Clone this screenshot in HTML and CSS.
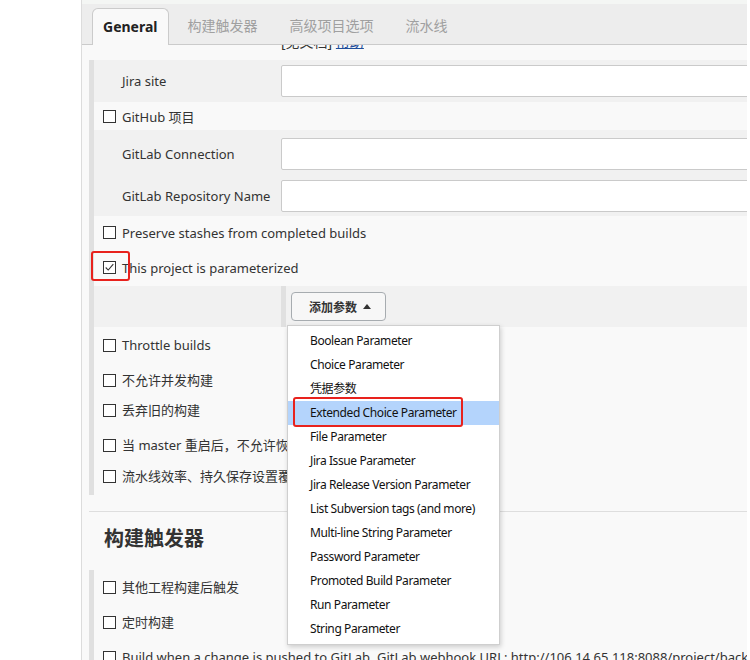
FILE: index.html
```html
<!DOCTYPE html>
<html lang="zh">
<head>
<meta charset="utf-8">
<title>Jenkins - General</title>
<link rel="stylesheet" href="styles.css">
</head>
<body>
<div class="page">
  <aside class="side"></aside>
  <main class="main">
    <nav class="tabs">
      <span class="tab active">General</span>
      <span class="tab">构建触发器</span>
      <span class="tab">高级项目选项</span>
      <span class="tab">流水线</span>
    </nav>
    <div class="clipped"><span class="clipped-text">[见文档] <a class="link">帮助</a></span></div>

    <section class="block">
      <div class="field shaded first">
        <span class="label">Jira site</span><span class="input"></span>
      </div>
      <div class="row r-github"><span class="cb"></span><span>GitHub 项目</span></div>
      <div class="nested shaded">
        <div class="field"><span class="label">GitLab Connection</span><span class="input"></span></div>
        <div class="field"><span class="label">GitLab Repository Name</span><span class="input"></span></div>
      </div>
      <div class="row r-33"><span class="cb"></span><span>Preserve stashes from completed builds</span></div>
      <div class="row r-param">
        <span class="cb checked"><svg viewBox="0 0 13 13" width="11" height="11"><polyline points="2,6.5 5,9.5 11,2.5" fill="none" stroke="#333" stroke-width="1.3"/></svg></span>
        <span>This project is parameterized</span>
        <span class="mark mark-cb"></span>
      </div>
      <div class="param shaded">
        <div class="param-inner">
          <button class="btn">添加参数 <svg class="caret" viewBox="0 0 8 5" width="8" height="5"><polygon points="0,5 4,0 8,5" fill="#333"/></svg></button>
          <ul class="menu">
            <li>Boolean Parameter</li>
            <li>Choice Parameter</li>
            <li>凭据参数</li>
            <li class="hl">Extended Choice Parameter<span class="mark mark-item"></span></li>
            <li>File Parameter</li>
            <li>Jira Issue Parameter</li>
            <li>Jira Release Version Parameter</li>
            <li>List Subversion tags (and more)</li>
            <li>Multi-line String Parameter</li>
            <li>Password Parameter</li>
            <li>Promoted Build Parameter</li>
            <li>Run Parameter</li>
            <li>String Parameter</li>
          </ul>
        </div>
      </div>
      <div class="row trow h35"><span class="cb"></span><span>Throttle builds</span></div>
      <div class="row trow h30"><span class="cb"></span><span>不允许并发构建</span></div>
      <div class="row trow h35"><span class="cb"></span><span>丢弃旧的构建</span></div>
      <div class="row trow h31"><span class="cb"></span><span>当 master 重启后，不允许恢复流水线</span></div>
      <div class="row trow h37"><span class="cb"></span><span>流水线效率、持久保存设置覆盖</span></div>
    </section>

    <hr class="sep">
    <h2 class="heading">构建触发器</h2>

    <section class="block triggers">
      <div class="row trow2 h35"><span class="cb"></span><span>其他工程构建后触发</span></div>
      <div class="row trow2 h35"><span class="cb"></span><span>定时构建</span></div>
      <div class="row trow2 h35"><span class="cb"></span><span class="nowrap">Build when a change is pushed to GitLab. GitLab webhook URL: http://106.14.65.118:8088/project/backend</span></div>
    </section>
  </main>
</div>
</body>
</html>
```

FILE: styles.css
```css
* { box-sizing: border-box; }
html, body { margin: 0; padding: 0; background: #fff; }
body {
  font-family: "Noto Sans", "Noto Sans CJK SC", sans-serif;
  font-size: 13px;
  color: #333;
}
.page { display: flex; height: 660px; overflow: hidden; }
.side { width: 82px; flex: none; border-right: 1px solid #dcdcdc; background: #fff; }
.main {
  width: 665px; flex: none;
  background: #f9f9f9;
  border-top: 4px solid #f4f6f4;
  overflow: hidden;
}
.tabs {
  display: flex; align-items: flex-end;
  height: 41px;
  background: #ededed;
  border-bottom: 1px solid #cbcbcb;
  padding-left: 10px;
}
.tab {
  height: 36px; line-height: 36px;
  padding: 0 11px; margin-right: 10px;
  font-size: 14px; color: #a0a0a0;
  white-space: nowrap;
}
.tab.active {
  background: #f9f9f9;
  border: 1px solid #cbcbcb; border-bottom: none;
  border-radius: 6px 6px 0 0;
  color: #222; font-weight: bold;
  height: 37px; margin-bottom: -1px;
  padding: 0 10px; margin-right: 8px;
}
.clipped { height: 15px; overflow: hidden; padding-left: 199px; }
.clipped-text { display: block; margin-top: -12px; line-height: 18px; font-size: 14px; color: #333; }
.link { color: #1f4e9a; text-decoration: underline; }

.block {
  margin-left: 7px;
  border-left: 5px solid #e0e0e0;
}
.shaded { background: #f1f1f1; }
.field {
  display: flex; align-items: center;
  padding-left: 28px;
}
.field.first { height: 42px; }
.label { width: 159px; flex: none; white-space: nowrap; }
.input {
  display: block; width: 480px; height: 32px; flex: none;
  background: #fff; border: 1px solid #cacaca; border-radius: 2px;
}
.nested { display: flex; flex-direction: column; gap: 10px; padding: 8px 0 4px; }

.row {
  position: relative;
  display: flex; align-items: center; gap: 6px;
  padding-left: 9px;
  white-space: nowrap;
}
.r-github { height: 28px; }
.r-33 { height: 33px; }
.r-param { height: 37px; }
.trow { align-items: flex-start; padding-top: 9px; }
.trow2 { align-items: flex-start; padding-top: 8px; }
.trow span:last-child, .trow2 span:last-child { line-height: 18px; }
.trow .cb, .trow2 .cb { margin-top: 3px; }
.h30 { height: 30px; }
.h31 { height: 31px; }
.h35 { height: 35px; }
.h37 { height: 37px; }
.cb {
  width: 13px; height: 13px; flex: none;
  border: 1px solid #333; background: #fff;
  display: flex; align-items: center; justify-content: center;
}
.mark {
  position: absolute;
  border: 2.5px solid #e8221d;
  border-radius: 3px;
}
.mark-cb { left: -3px; top: 2px; width: 39px; height: 30px; }

.param { height: 41px; padding-left: 187px; }
.param-inner {
  position: relative;
  height: 41px;
  border-left: 5px solid #e0e0e0;
  padding: 6px 0 0 5px;
}
.btn {
  display: flex; align-items: center; gap: 6px;
  width: 95px; height: 29px;
  padding: 0 0 0 17px;
  background: #f7f7f7;
  border: 1px solid #a7acb0; border-radius: 4px;
  font-family: "Noto Sans", "Noto Sans CJK SC", sans-serif;
  font-size: 12px; font-weight: bold; color: #333;
}
.caret { display: block; }
.menu {
  position: absolute; left: 1px; top: 39px; z-index: 5;
  width: 213px;
  margin: 0; padding: 3px 0 3px;
  list-style: none;
  background: #fff;
  border: 1px solid #cfcfcf;
  box-shadow: 1px 2px 5px rgba(0,0,0,0.18);
}
.menu li {
  position: relative;
  height: 24px; line-height: 24px;
  padding-left: 22px;
  font-size: 12px; letter-spacing: -0.4px; color: #111;
  white-space: nowrap;
}
.menu li.hl { background: #b4d4fc; }
.mark-item { left: 5px; top: -4px; width: 170px; height: 30px; }

.sep { margin: 16px 0 0 7px; border: 0; border-top: 1px solid #dedede; height: 0; }
.heading {
  margin: 0; height: 58px; line-height: 54px;
  padding-left: 22px;
  font-size: 20px; font-weight: bold; color: #333;
}
.nowrap { white-space: nowrap; }
```
